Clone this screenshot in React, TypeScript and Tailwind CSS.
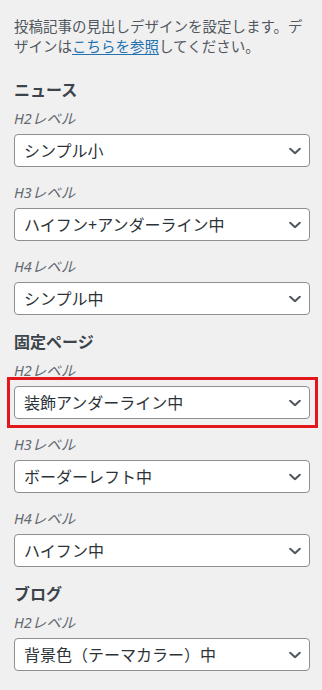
type Item = { label: string; value: string; marked?: boolean };
type Section = { title: string; items: Item[] };

const sections: Section[] = [
  {
    title: "ニュース",
    items: [
      { label: "H2レベル", value: "シンプル小" },
      { label: "H3レベル", value: "ハイフン+アンダーライン中" },
      { label: "H4レベル", value: "シンプル中" },
    ],
  },
  {
    title: "固定ページ",
    items: [
      { label: "H2レベル", value: "装飾アンダーライン中", marked: true },
      { label: "H3レベル", value: "ボーダーレフト中" },
      { label: "H4レベル", value: "ハイフン中" },
    ],
  },
  {
    title: "ブログ",
    items: [
      { label: "H2レベル", value: "背景色（テーマカラー）中" },
      { label: "H3レベル", value: "ボーダーレフト中" },
      { label: "H4レベル", value: "シンプル中" },
    ],
  },
];

const jp = "font-['Noto_Sans','Noto_Sans_CJK_JP',sans-serif]";

const SelectField = ({ item }: { item: Item }) => (
  <div className="flex flex-col">
    <span className="text-[14.5px] leading-5 italic text-[#646970] mb-[6px]">
      {item.label}
    </span>
    <div className="relative">
      <select
        defaultValue={item.value}
        className={`${jp} block w-full h-[33px] appearance-none rounded-[4px] border border-[#8c8f94] bg-white pl-[9px] pr-8 text-[16px] leading-5 text-[#2c3338]`}
      >
        <option>{item.value}</option>
      </select>
      {/* chevron */}
      <svg
        viewBox="0 0 12 7"
        className="pointer-events-none absolute right-[9px] top-1/2 -translate-y-1/2 w-[12px] h-[7px]"
        fill="none"
        stroke="#50575e"
        strokeWidth={2}
        strokeLinecap="round"
        strokeLinejoin="round"
      >
        <polyline points="1.2,1.2 6,5.8 10.8,1.2" />
      </svg>
      {item.marked && (
        <div className="pointer-events-none absolute -left-[7px] -right-[8px] -top-[9px] -bottom-[9px] border-[3px] border-[#e3161b]" />
      )}
    </div>
  </div>
);

export default function App() {
  return (
    <div
      className={`${jp} min-h-screen w-[322px] overflow-hidden bg-[#f0f0f0] pl-[14px] pr-[12px] pt-[16px]`}
    >
      <p className="text-[14.5px] leading-5 text-[#50575e] mb-6">
        投稿記事の見出しデザインを設定します。デザインは
        <a href="#" className="text-[#2271b1] underline underline-offset-2">
          こちらを参照
        </a>
        してください。
      </p>

      <div className="flex flex-col gap-[17px]">
        {sections.map((section) => (
          <section key={section.title} className="flex flex-col">
            <h3 className="text-[16px] leading-5 font-bold text-[#3c434a] mb-2">
              {section.title}
            </h3>
            <div className="flex flex-col gap-[15px]">
              {section.items.map((item) => (
                <SelectField key={item.label} item={item} />
              ))}
            </div>
          </section>
        ))}
      </div>
    </div>
  );
}
